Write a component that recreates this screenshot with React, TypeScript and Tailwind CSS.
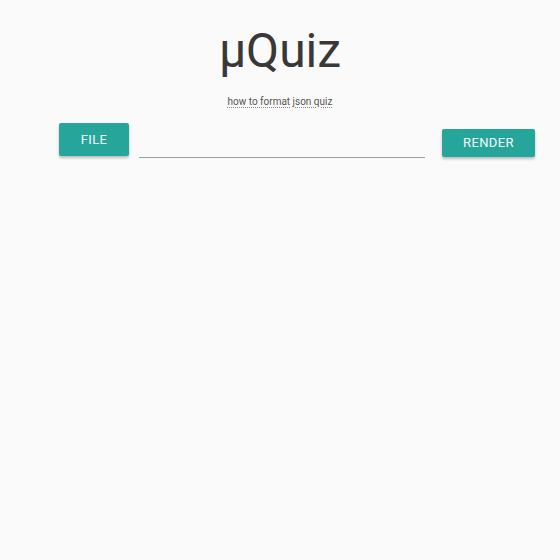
export default function App() {
  return (
    <main className="w-full h-[560px] bg-[#fafafa] font-['Roboto',sans-serif] flex flex-col items-center">
      <h1 className="mt-[23px] text-[48px] leading-[56px] text-[#383838] font-normal">μQuiz</h1>
      <a
        href="#"
        className="mt-[17px] text-[10px] leading-[12px] text-[#555555] underline decoration-dotted decoration-[#888888] underline-offset-2"
      >
        how to format json quiz
      </a>
      <div className="mt-[15px] w-full px-[59px] pr-[25px] flex items-start">
        <button className="w-[70px] h-[33px] bg-[#26a69a] text-[#f2fbfa] text-[13px] tracking-[0.4px] uppercase rounded-[2px] shadow-[0_2px_3px_rgba(0,0,0,0.25)]">
          File
        </button>
        <div className="ml-[10px] w-[286px] h-[35px] border-b border-[#9e9e9e]" />
        <button className="ml-[17px] mt-[6px] w-[93px] h-[28px] bg-[#26a69a] text-[#f2fbfa] text-[13px] tracking-[0.4px] uppercase rounded-[2px] shadow-[0_2px_3px_rgba(0,0,0,0.25)]">
          Render
        </button>
      </div>
    </main>
  );
}
